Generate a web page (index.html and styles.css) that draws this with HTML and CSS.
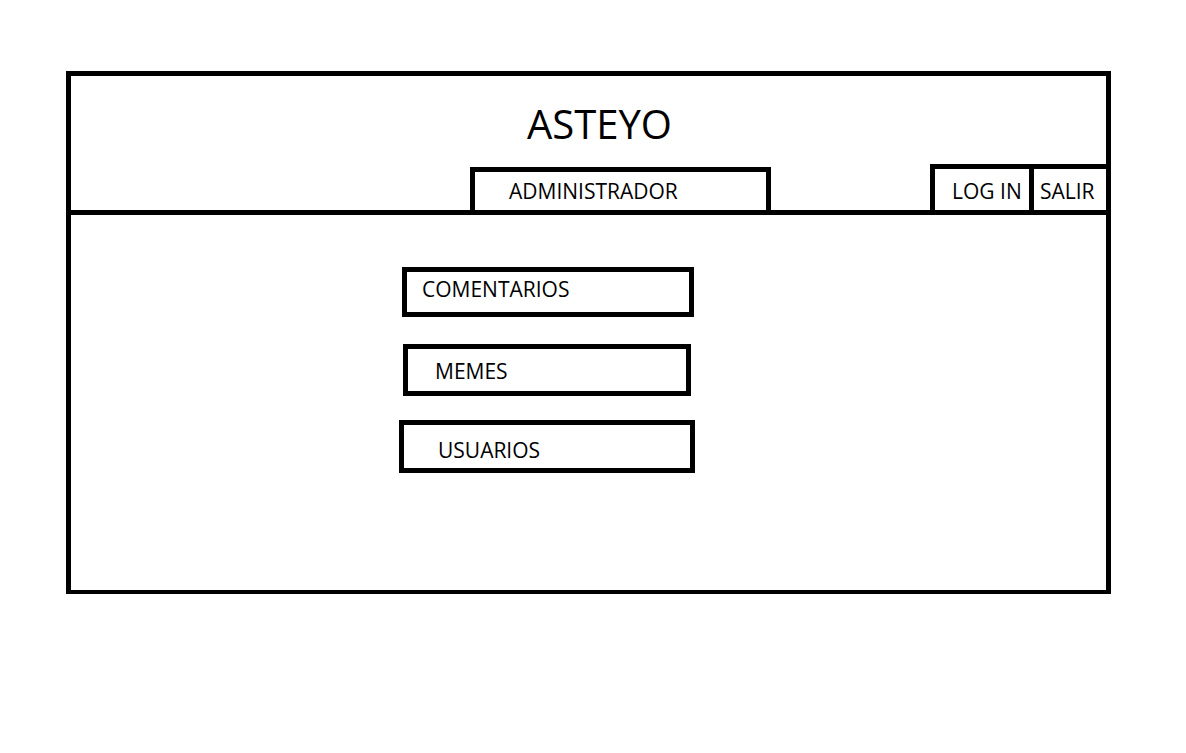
FILE: index.html
```html
<!DOCTYPE html>
<html>
<head>
    <meta charset="utf-8">
    <meta name="viewport" content="width=device-width, initial-scale=1.0">
    <title>Asteyo - Administrador</title>
    <link rel="stylesheet" href="styles.css">
</head>
<body>
    <div class="frame">
        <div class="header">
            <h1 class="title">ASTEYO</h1>
            <div class="nav">
                <div class="nav-admin">ADMINISTRADOR</div>
                <div class="nav-user">
                    <div class="nav-cell nav-login">LOG IN</div>
                    <div class="nav-cell nav-exit">SALIR</div>
                </div>
            </div>
        </div>
        <div class="content">
            <div class="option option-comments">COMENTARIOS</div>
            <div class="option option-memes">MEMES</div>
            <div class="option option-users">USUARIOS</div>
        </div>
    </div>
</body>
</html>
```

FILE: styles.css
```css
body {
    margin: 0;
    background: #fff;
    color: #000;
    font-family: "Open Sans", "Noto Sans", sans-serif;
}
.frame {
    margin: 71px 0 0 66px;
    width: 1045px;
    height: 523px;
    box-sizing: border-box;
    border: 5px solid #000;
    border-bottom-width: 4px;
}
.header {
    display: flex;
    flex-direction: column;
    height: 139px;
    box-sizing: border-box;
    border-bottom: 5px solid #000;
}
.title {
    margin: 28px 0 0 0;
    padding-left: 22px;
    font-size: 40px;
    line-height: 40px;
    font-weight: normal;
    text-align: center;
}
.nav {
    display: flex;
    align-items: flex-end;
    margin-top: auto;
    padding-left: 399px;
}
.nav-admin {
    width: 301px;
    height: 43px;
    box-sizing: border-box;
    border: 5px solid #000;
    border-bottom: none;
    padding: 9px 0 0 34px;
    font-size: 21px;
    line-height: 21px;
}
.nav-user {
    display: flex;
    margin-left: auto;
    height: 46px;
    box-sizing: border-box;
    border-top: 5px solid #000;
}
.nav-cell {
    border-left: 5px solid #000;
    padding-top: 12px;
    font-size: 21px;
    line-height: 21px;
}
.nav-login {
    width: 77px;
    padding-left: 17px;
}
.nav-exit {
    width: 66px;
    padding-left: 6px;
}
.content {
    display: flex;
    flex-direction: column;
    align-items: flex-start;
}
.option {
    box-sizing: border-box;
    border: 5px solid #000;
    font-size: 21px;
    line-height: 21px;
}
.option-comments {
    margin: 52px 0 0 331px;
    width: 292px;
    height: 50px;
    padding: 7px 0 0 15px;
}
.option-memes {
    margin: 27px 0 0 332px;
    width: 288px;
    height: 52px;
    padding: 12px 0 0 27px;
}
.option-users {
    margin: 24px 0 0 328px;
    width: 296px;
    height: 53px;
    padding: 15px 0 0 34px;
}
```
